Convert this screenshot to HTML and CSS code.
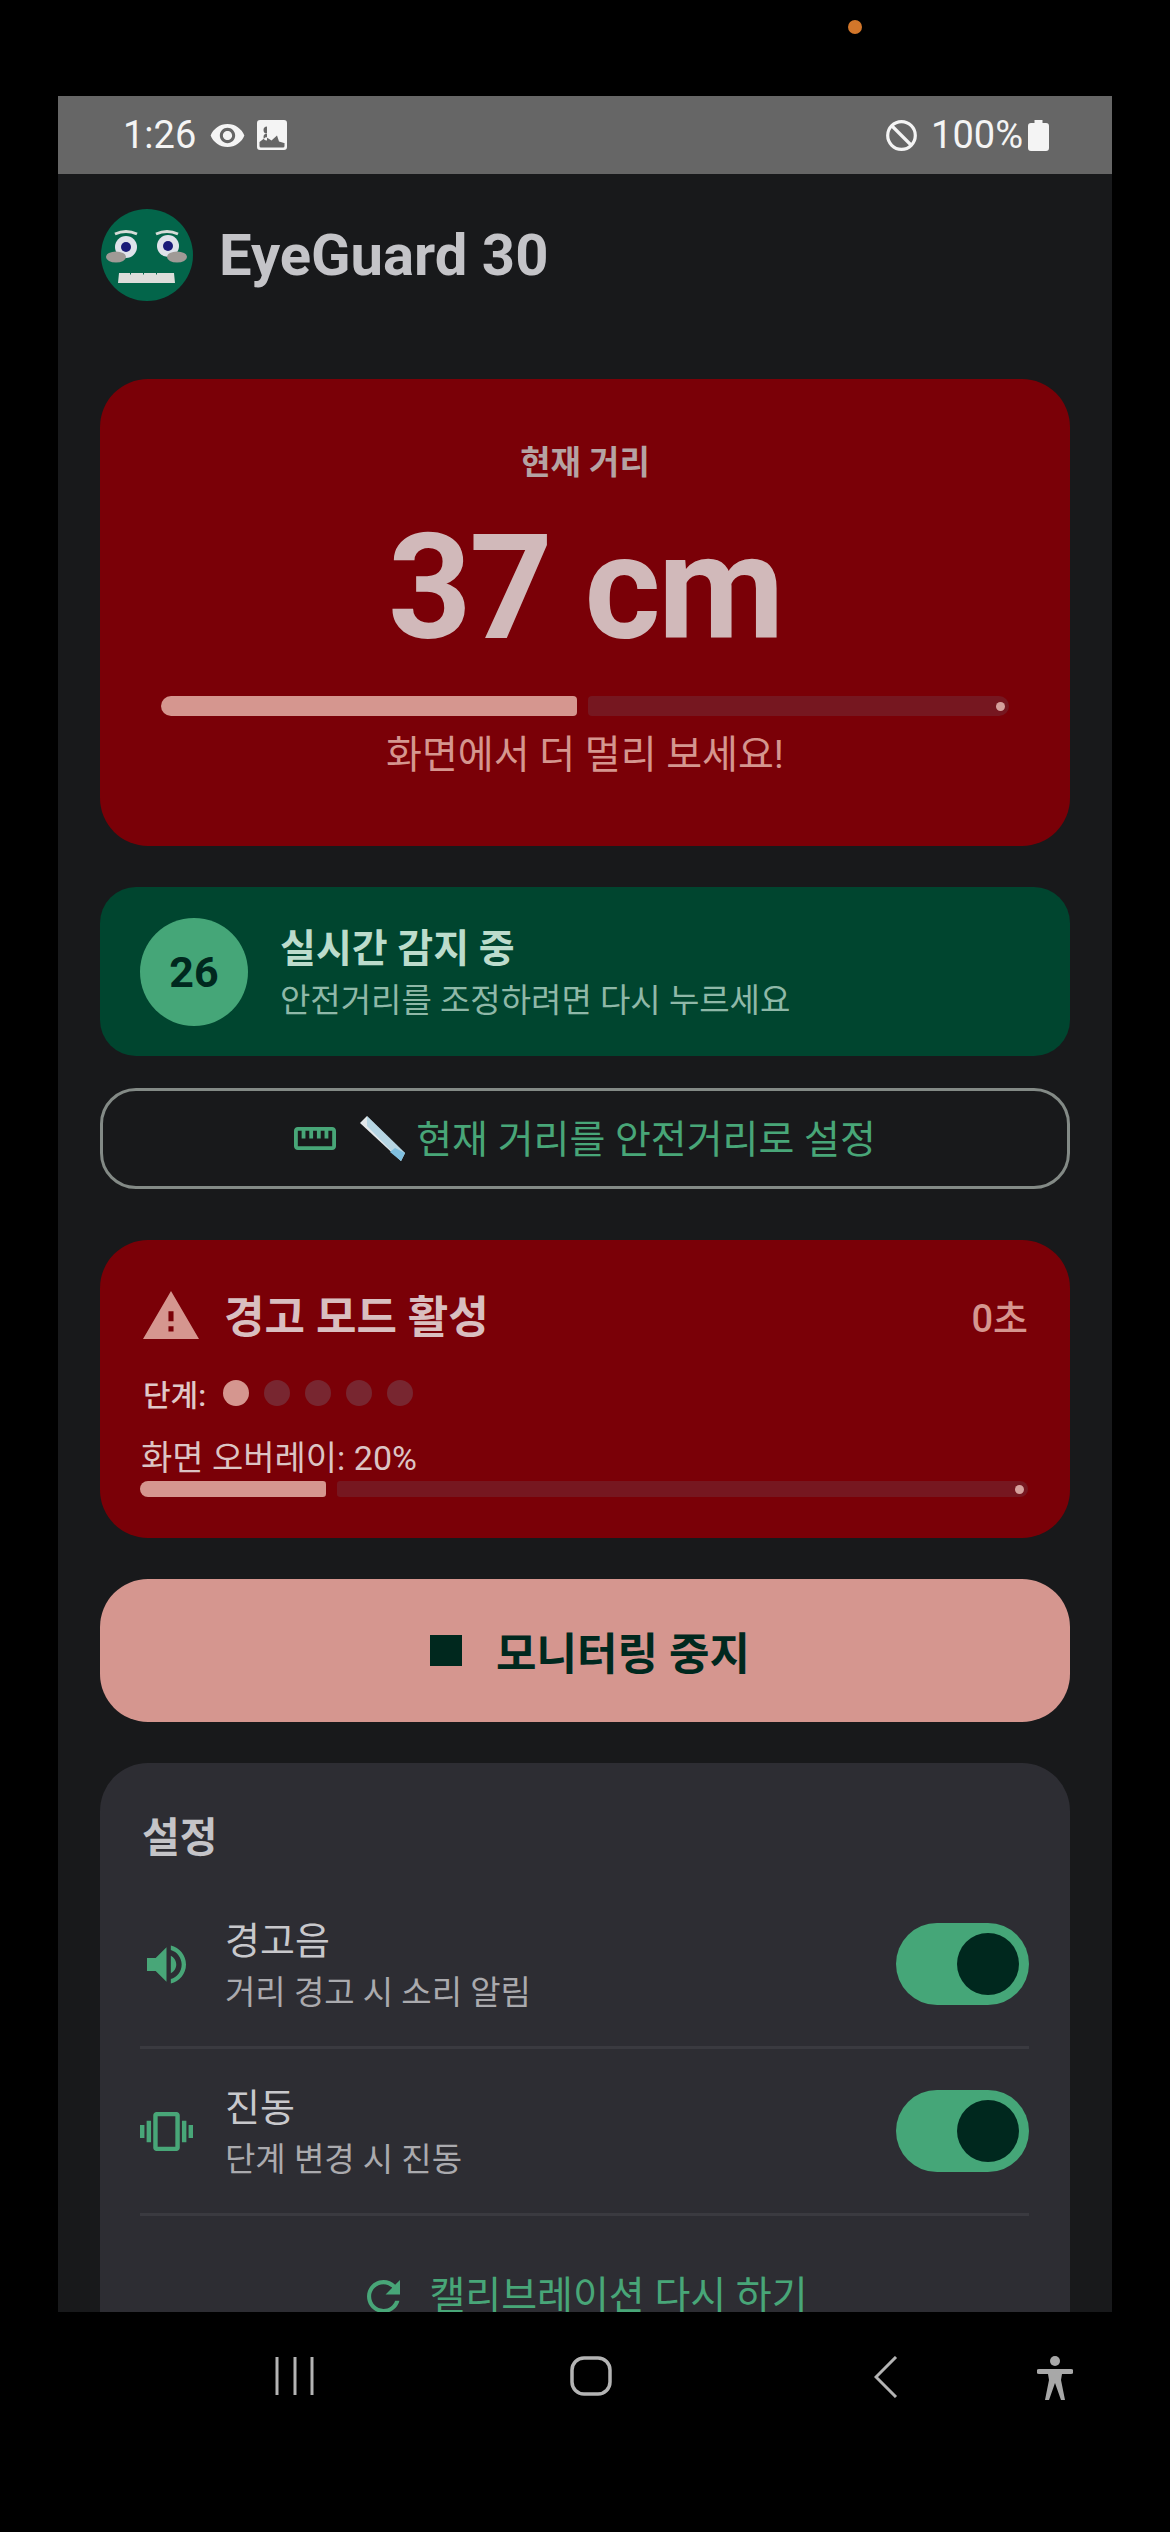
FILE: index.html
```html
<!DOCTYPE html>
<html lang="ko">
<head>
    <meta charset="UTF-8">
    <meta name="viewport" content="width=device-width, initial-scale=1.0">
    <title>EyeGuard 30</title>
    <link rel="stylesheet" href="styles.css">
</head>
<body>

    <div class="camera-strip"><span class="camera-dot"></span></div>

    <div class="screen">
        <div class="status-bar">
            <div class="status-left">
                <span class="status-time">1:26</span>
                <svg class="status-eye" viewBox="1 4.5 22 15"><path fill="#f4f4f4" d="M12 4.500C7 4.500 2.730 7.610 1 12c1.730 4.390 6 7.500 11 7.500s9.270-3.110 11-7.500c-1.730-4.390-6-7.500-11-7.500zM12 17c-2.760 0-5-2.240-5-5s2.240-5 5-5 5 2.240 5 5-2.240 5-5 5zm0-8c-1.660 0-3 1.340-3 3s1.340 3 3 3 3-1.340 3-3-1.340-3-3-3z"/></svg>
                <svg class="status-image" viewBox="0 0 30 30"><path fill="#f4f4f4" fill-rule="evenodd" d="M3 0h24a3 3 0 0 1 3 3v24a3 3 0 0 1-3 3H3a3 3 0 0 1-3-3V3a3 3 0 0 1 3-3zm7 6.500a3.500 3.500 0 1 0 0 7 3.500 3.500 0 0 0 0 7zM2.500 22v4a1.500 1.500 0 0 0 1.500 1.500h22a1.500 1.500 0 0 0 1.500-1.500v-3H27l-5-1.500-2-6-5.500 5-5.500-3.500z"/></svg>
            </div>
            <div class="status-right">
                <svg class="status-block" viewBox="0 0 31 31"><circle cx="15.500" cy="15.500" r="13.800" fill="none" stroke="#f4f4f4" stroke-width="3.200"/><path d="M6 6l19 19" stroke="#f4f4f4" stroke-width="3.200"/></svg>
                <span class="status-battery-text">100%</span>
                <svg class="status-battery" viewBox="0 0 21 31"><path fill="#f4f4f4" d="M6.500 0h8v3H18a3 3 0 0 1 3 3v22a3 3 0 0 1-3 3H3a3 3 0 0 1-3-3V6a3 3 0 0 1 3-3h3.500z"/></svg>
            </div>
        </div>

        <div class="content">
            <div class="app-header">
                <svg class="logo" viewBox="0 0 92 92">
                    <circle cx="46" cy="46" r="46" fill="#03654a"/>
                    <path d="M14 25q11-5 22 0M55 25q11-5 22 0" fill="none" stroke="#d6dcd8" stroke-width="3"/>
                    <circle cx="25" cy="38" r="11" fill="#dfe2ea"/>
                    <circle cx="67" cy="37" r="11" fill="#dfe2ea"/>
                    <circle cx="25" cy="38" r="5" fill="#1a1a78"/>
                    <circle cx="67" cy="37" r="5" fill="#1a1a78"/>
                    <ellipse cx="15" cy="48" rx="10" ry="5.500" fill="#a09a96"/>
                    <ellipse cx="76" cy="48" rx="10" ry="5.500" fill="#a09a96"/>
                    <path d="M18 64h11v1.500h1V64h12v1.500h1V64h12v1.500h1V64h17l1 10H17z" fill="#dcdedb"/>
                </svg>
                <h1 class="app-title">EyeGuard 30</h1>
            </div>

            <div class="card card-alert distance-card">
                <div class="distance-label">현재 거리</div>
                <div class="distance-value">37 cm</div>
                <div class="progress progress-big">
                    <div class="progress-fill" style="width: 49%"></div>
                    <div class="progress-track"><span class="progress-stop"></span></div>
                </div>
                <div class="distance-message">화면에서 더 멀리 보세요!</div>
            </div>

            <div class="card detect-card">
                <div class="detect-badge">26</div>
                <div class="detect-text">
                    <div class="detect-title">실시간 감지 중</div>
                    <div class="detect-sub">안전거리를 조정하려면 다시 누르세요</div>
                </div>
            </div>

            <button class="set-distance-btn">
                <svg class="ruler-icon" viewBox="1 6 22 12"><path fill="#48a678" d="M21 6H3c-1.100 0-2 .9-2 2v8c0 1.100.9 2 2 2h18c1.100 0 2-.9 2-2V8c0-1.100-.9-2-2-2zm0 10H3V8h2v4h2V8h2v4h2V8h2v4h2V8h2v4h2V8h2v8z"/></svg>
                <svg class="ruler-emoji" viewBox="0 0 45 45">
                    <path fill="#e4e8ea" d="M0 7l7-7 38 37-4 8z"/>
                    <path fill="#8fc6df" d="M7 10l34 35 4-8L7 0z" opacity="0.55"/>
                    <path fill="#7fbfe0" d="M30 36l5-4 10 5-4 8z"/>
                </svg>
                <span class="set-distance-text">현재 거리를 안전거리로 설정</span>
            </button>

            <div class="card card-alert warn-card">
                <div class="warn-head">
                    <svg class="warn-icon" viewBox="1 2 22 19" preserveAspectRatio="none"><path fill="#d5968f" d="M1 21h22L12 2 1 21zm12-3h-2v-2h2v2zm0-4h-2v-4h2v4z"/></svg>
                    <div class="warn-title">경고 모드 활성</div>
                    <div class="warn-time">0초</div>
                </div>
                <div class="warn-steps">
                    <span class="warn-steps-label">단계:</span>
                    <span class="step-dot step-on"></span>
                    <span class="step-dot"></span>
                    <span class="step-dot"></span>
                    <span class="step-dot"></span>
                    <span class="step-dot"></span>
                </div>
                <div class="warn-overlay">화면 오버레이: 20%</div>
                <div class="progress progress-small">
                    <div class="progress-fill" style="width: 21%"></div>
                    <div class="progress-track"><span class="progress-stop"></span></div>
                </div>
            </div>

            <button class="stop-btn">
                <span class="stop-square"></span>
                <span>모니터링 중지</span>
            </button>

            <div class="card settings-card">
                <div class="settings-title">설정</div>

                <div class="setting-row">
                    <div class="setting-icon">
                        <svg class="icon-sound" viewBox="3 3 18 18"><path fill="#48a678" d="M3 9v6h4l5 5V4L7 9H3zm13.500 3c0-1.770-1.020-3.290-2.500-4.030v8.050c1.480-.73 2.500-2.250 2.500-4.020zM14 3.230v2.060c2.890.86 5 3.540 5 6.710s-2.110 5.850-5 6.710v2.060c4.010-.91 7-4.490 7-8.770s-2.990-7.860-7-8.770z"/></svg>
                    </div>
                    <div class="setting-text">
                        <div class="setting-title">경고음</div>
                        <div class="setting-sub">거리 경고 시 소리 알림</div>
                    </div>
                    <div class="switch"><span class="switch-thumb"></span></div>
                </div>

                <div class="setting-row">
                    <div class="setting-icon">
                        <svg class="icon-vibrate" viewBox="0 3 24 18" preserveAspectRatio="none"><path fill="#48a678" d="M0 15h2V9H0v6zm3 2h2V7H3v10zm19-8v6h2V9h-2zm-3 8h2V7h-2v10zM16.500 3h-9C6.670 3 6 3.670 6 4.500v15c0 .83.67 1.500 1.500 1.500h9c.83 0 1.500-.67 1.500-1.500v-15c0-.83-.67-1.500-1.500-1.500zM16 19H8V5h8v14z"/></svg>
                    </div>
                    <div class="setting-text">
                        <div class="setting-title">진동</div>
                        <div class="setting-sub">단계 변경 시 진동</div>
                    </div>
                    <div class="switch"><span class="switch-thumb"></span></div>
                </div>

                <div class="recalibrate">
                    <svg class="icon-refresh" viewBox="4 4 16 16"><path fill="#48a678" d="M17.650 6.350C16.200 4.900 14.210 4 12 4c-4.420 0-7.990 3.580-7.990 8s3.570 8 7.990 8c3.730 0 6.840-2.550 7.730-6h-2.080c-.82 2.330-3.040 4-5.650 4-3.310 0-6-2.690-6-6s2.690-6 6-6c1.660 0 3.140.69 4.220 1.780L13 11h7V4l-2.350 2.350z"/></svg>
                    <span>캘리브레이션 다시 하기</span>
                </div>
            </div>
        </div>
    </div>

    <div class="nav-bar">
        <svg class="nav-recents" viewBox="0 0 40 40"><path stroke="#b4b4b4" stroke-width="3" d="M2 1v38M20 1v38M37 1v38"/></svg>
        <svg class="nav-home" viewBox="0 0 42 40"><rect x="2" y="2" width="38" height="36" rx="12" fill="none" stroke="#b4b4b4" stroke-width="3.500"/></svg>
        <svg class="nav-back" viewBox="0 0 24 42"><path fill="none" stroke="#b4b4b4" stroke-width="3" d="M22 1L2 21l20 20"/></svg>
        <svg class="nav-access" viewBox="0 0 36 44"><circle cx="18" cy="5" r="5" fill="#a8a8a8"/><path fill="#a8a8a8" d="M2 13h32a2.500 2.500 0 0 1 0 5h-9l-1 6 4 20h-4l-6-17-6 17H8l4-20-1-6H2a2.500 2.500 0 0 1 0-5z"/></svg>
    </div>

</body>
</html>
```

FILE: styles.css
```css
* {
    box-sizing: border-box;
}

body {
    margin: 0;
    height: 2532px;
    overflow: hidden;
    background-color: #000;
    font-family: Roboto, "Noto Sans CJK KR", sans-serif;
}

/* top strip with the camera indicator */
.camera-strip {
    height: 96px;
    padding: 20px 0 0 848px;
}

.camera-dot {
    display: block;
    width: 14px;
    height: 14px;
    border-radius: 50%;
    background-color: #d2762a;
}

.screen {
    width: 1054px;
    height: 2216px;
    margin-left: 58px;
    overflow: hidden;
    background-color: #18191b;
}

/* status bar */
.status-bar {
    height: 78px;
    background-color: #666;
    color: #f4f4f4;
    display: flex;
    justify-content: space-between;
    align-items: center;
    padding: 0 63px 0 65px;
    font-size: 38px;
}

.status-left,
.status-right {
    display: flex;
    align-items: center;
}

.status-time {
    margin-right: 14px;
}

.status-eye {
    width: 35px;
    height: 23px;
    margin-right: 12px;
}

.status-image {
    width: 30px;
    height: 30px;
}

.status-block {
    width: 31px;
    height: 31px;
    margin-right: 14px;
}

.status-battery {
    width: 21px;
    height: 31px;
    margin-left: 5px;
}

/* main scroll area */
.content {
    padding: 35px 42px 0;
}

.app-header {
    display: flex;
    align-items: center;
    margin-bottom: 78px;
}

.logo {
    width: 92px;
    height: 92px;
    margin: 0 26px 0 1px;
}

.app-title {
    margin: 0;
    font-size: 58px;
    font-weight: 700;
    color: #c4c4c8;
}

.card {
    border-radius: 48px;
}

.card-alert {
    background-color: #7a0007;
}

/* current distance */
.distance-card {
    padding: 60px 61px 67px;
    text-align: center;
    margin-bottom: 41px;
}

.distance-label {
    font-size: 33px;
    line-height: 48px;
    font-weight: 700;
    color: #b5a3a3;
}

.distance-value {
    margin-top: 22px;
    font-size: 146px;
    line-height: 160px;
    font-weight: 700;
    letter-spacing: -2.5px;
    color: #d1b9ba;
}

.distance-message {
    margin-top: 15px;
    font-size: 39px;
    line-height: 48px;
    color: #d5968f;
}

.progress {
    display: flex;
    gap: 11px;
}

.progress-big {
    height: 20px;
    margin-top: 27px;
}

.progress-small {
    height: 16px;
    margin-top: 5px;
}

.progress-fill {
    background-color: #d5968f;
    border-radius: 10px 4px 4px 10px;
}

.progress-track {
    flex: 1;
    display: flex;
    justify-content: flex-end;
    align-items: center;
    padding-right: 4px;
    background-color: #761720;
    border-radius: 4px 10px 10px 4px;
}

.progress-stop {
    width: 9px;
    height: 9px;
    border-radius: 50%;
    background-color: #d5a09c;
}

/* live detection */
.detect-card {
    height: 169px;
    margin-bottom: 32px;
    padding: 0 40px;
    display: flex;
    align-items: center;
    gap: 32px;
    border-radius: 36px;
    background-color: #00452f;
}

.detect-badge {
    width: 108px;
    height: 108px;
    border-radius: 50%;
    background-color: #45a678;
    color: #00281e;
    display: flex;
    justify-content: center;
    align-items: center;
    font-size: 43px;
    font-weight: 700;
}

.detect-text {
    padding-top: 4px;
}

.detect-title {
    font-size: 39px;
    line-height: 48px;
    font-weight: 700;
    color: #bcdccc;
}

.detect-sub {
    margin-top: 6px;
    font-size: 33px;
    line-height: 44px;
    color: #8fb8a8;
}

.set-distance-btn {
    width: 100%;
    height: 101px;
    margin-bottom: 51px;
    display: flex;
    justify-content: center;
    align-items: center;
    background: none;
    border: 3px solid #838a86;
    border-radius: 36px;
    font-family: inherit;
    font-size: 39px;
    color: #48a678;
}

.set-distance-text {
    padding-bottom: 6px;
}

.ruler-icon {
    width: 42px;
    height: 23px;
    margin-right: 24px;
}

.ruler-emoji {
    width: 45px;
    height: 45px;
    margin-right: 11px;
}

/* warning mode */
.warn-card {
    padding: 50px 42px 41px 40px;
    margin-bottom: 41px;
}

.warn-head {
    display: flex;
    align-items: center;
    height: 50px;
    padding-left: 3px;
}

.warn-icon {
    width: 56px;
    height: 48px;
    margin-right: 25px;
}

.warn-title {
    flex: 1;
    padding-bottom: 3px;
    font-size: 44px;
    font-weight: 700;
    color: #d9bfc0;
}

.warn-time {
    font-size: 38px;
    font-weight: 500;
    color: #d5968f;
}

.warn-steps {
    display: flex;
    align-items: center;
    gap: 15px;
    height: 40px;
    margin-top: 33px;
    padding-left: 3px;
}

.warn-steps-label {
    font-size: 30px;
    font-weight: 500;
    color: #e0c8c8;
    margin-right: 2px;
}

.step-dot {
    width: 26px;
    height: 26px;
    border-radius: 50%;
    background-color: #782630;
}

.step-on {
    background-color: #d5968f;
}

.warn-overlay {
    margin-top: 27px;
    padding-left: 1px;
    font-size: 34px;
    line-height: 36px;
    color: #dcc4c4;
}

.stop-btn {
    width: 100%;
    height: 143px;
    margin-bottom: 41px;
    padding-left: 16px;
    display: flex;
    justify-content: center;
    align-items: center;
    gap: 34px;
    background-color: #d5968f;
    border: none;
    border-radius: 48px;
    font-family: inherit;
    font-size: 44px;
    font-weight: 700;
    color: #00281e;
}

.stop-square {
    width: 32px;
    height: 31px;
    background-color: #00281e;
}

/* settings */
.settings-card {
    padding: 50px 41px 0 40px;
    background-color: #2d2d33;
    height: 700px;
}

.settings-title {
    font-size: 41px;
    line-height: 50px;
    font-weight: 700;
    color: #c4c4c8;
    margin-bottom: 19px;
    padding-left: 2px;
}

.setting-row {
    height: 167px;
    display: flex;
    align-items: center;
    border-bottom: 3px solid #3a3a40;
}

.setting-icon {
    width: 85px;
    display: flex;
}

.icon-sound {
    width: 39px;
    height: 39px;
    margin-left: 7px;
}

.icon-vibrate {
    width: 53px;
    height: 39px;
}

.setting-text {
    flex: 1;
    padding-top: 6px;
}

.setting-title {
    font-size: 38px;
    line-height: 48px;
    color: #c8c8cc;
}

.setting-sub {
    margin-top: 4px;
    font-size: 33px;
    line-height: 48px;
    color: #aaaaae;
}

.switch {
    width: 133px;
    height: 82px;
    padding: 10px 10px 0 0;
    display: flex;
    justify-content: flex-end;
    border-radius: 41px;
    background-color: #45a678;
}

.switch-thumb {
    width: 62px;
    height: 62px;
    border-radius: 50%;
    background-color: #00281e;
}

.recalibrate {
    margin-top: 56px;
    padding-left: 6px;
    display: flex;
    justify-content: center;
    align-items: center;
    gap: 29px;
    font-size: 39px;
    line-height: 48px;
    color: #48a678;
}

.icon-refresh {
    width: 33px;
    height: 33px;
}

/* system navigation bar */
.nav-bar {
    position: relative;
    height: 220px;
}

.nav-bar svg {
    position: absolute;
}

.nav-recents {
    left: 275px;
    top: 44px;
    width: 40px;
    height: 40px;
}

.nav-home {
    left: 570px;
    top: 44px;
    width: 42px;
    height: 40px;
}

.nav-back {
    left: 874px;
    top: 44px;
    width: 24px;
    height: 42px;
}

.nav-access {
    left: 1037px;
    top: 44px;
    width: 36px;
    height: 44px;
}
```
